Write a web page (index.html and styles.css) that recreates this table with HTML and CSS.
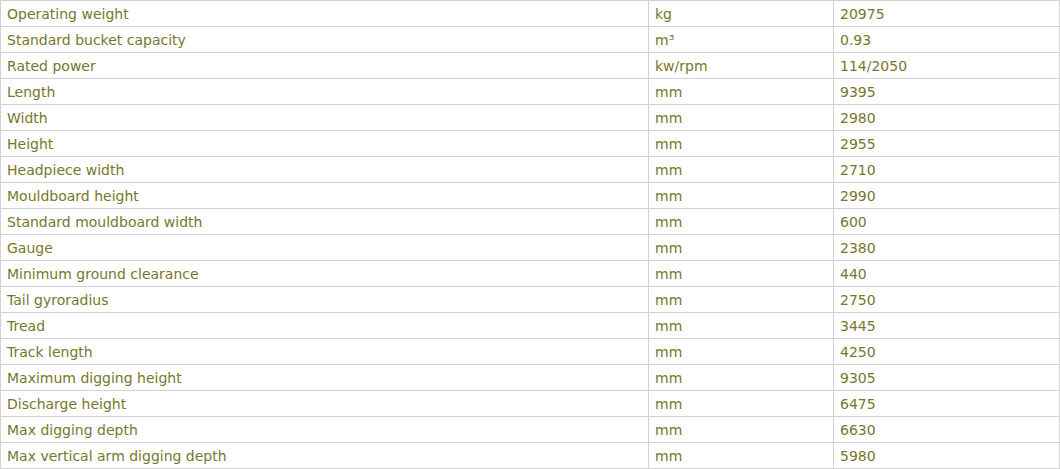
FILE: index.html
```html
<!DOCTYPE html>
<html>
<head>
<meta charset="utf-8">
<link rel="stylesheet" href="styles.css">
</head>
<body>
<table class="spec">
<colgroup><col class="c1"><col class="c2"><col class="c3"></colgroup>
<tbody>
<tr><td>Operating weight</td><td>kg</td><td>20975</td></tr>
<tr><td>Standard bucket capacity</td><td>m³</td><td>0.93</td></tr>
<tr><td>Rated power</td><td>kw/rpm</td><td>114/2050</td></tr>
<tr><td>Length</td><td>mm</td><td>9395</td></tr>
<tr><td>Width</td><td>mm</td><td>2980</td></tr>
<tr><td>Height</td><td>mm</td><td>2955</td></tr>
<tr><td>Headpiece width</td><td>mm</td><td>2710</td></tr>
<tr><td>Mouldboard height</td><td>mm</td><td>2990</td></tr>
<tr><td>Standard mouldboard width</td><td>mm</td><td>600</td></tr>
<tr><td>Gauge</td><td>mm</td><td>2380</td></tr>
<tr><td>Minimum ground clearance</td><td>mm</td><td>440</td></tr>
<tr><td>Tail gyroradius</td><td>mm</td><td>2750</td></tr>
<tr><td>Tread</td><td>mm</td><td>3445</td></tr>
<tr><td>Track length</td><td>mm</td><td>4250</td></tr>
<tr><td>Maximum digging height</td><td>mm</td><td>9305</td></tr>
<tr><td>Discharge height</td><td>mm</td><td>6475</td></tr>
<tr><td>Max digging depth</td><td>mm</td><td>6630</td></tr>
<tr><td>Max vertical arm digging depth</td><td>mm</td><td>5980</td></tr>
</tbody>
</table>
</body>
</html>
```
FILE: styles.css
```css
html, body { margin: 0; padding: 0; background: #fff; }
.spec {
  border-collapse: collapse;
  width: 1059px;
  table-layout: fixed;
  font-family: "DejaVu Sans", Verdana, sans-serif;
  font-size: 14px;
  color: #77772c;
}
.c1 { width: 648px; }
.c2 { width: 185px; }
.c3 { width: 226px; }
.spec td {
  border: 1px solid #d2d2d2;
  padding: 1px 0 0 6px;
  box-sizing: border-box;
  height: 26px;
  white-space: nowrap;
  line-height: 24px;
  vertical-align: middle;
}
```
